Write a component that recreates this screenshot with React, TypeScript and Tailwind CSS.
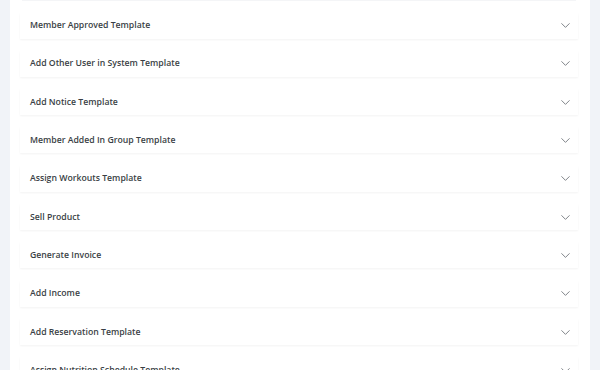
import React from 'react';
import { ChevronDown } from 'lucide-react';

const templates = [
  'Member Approved Template',
  'Add Other User in System Template',
  'Add Notice Template',
  'Member Added In Group Template',
  'Assign Workouts Template',
  'Sell Product',
  'Generate Invoice',
  'Add Income',
  'Add Reservation Template',
  'Assign Nutrition Schedule Template',
];

export default function App() {
  return (
    <div
      className="w-[600px] h-[370px] overflow-hidden bg-[#f1f3f8] flex pl-[10px] pr-[10px]"
      style={{ fontFamily: '"Open Sans", "Noto Sans", sans-serif' }}
    >
      <div className="flex-1 bg-white pl-[10px] pr-[12px]">
        {/* bottom edge of the card above the fold */}
        <div className="h-[1px] mx-[2px] bg-[#f4f5f7]" />
        <div className="flex flex-col gap-[12.33px] pt-[11.5px]">
          {templates.map((title) => (
            <div
              key={title}
              className="h-[26px] flex items-center justify-between pl-[10px] pr-[5px] bg-white shadow-[0_1px_2px_rgba(0,0,0,0.05)]"
            >
              <span className="text-[8.7px] font-semibold text-[#3a3f45]">{title}</span>
              <ChevronDown className="w-[15px] h-[15px] text-[#62676e]" strokeWidth={1.3} />
            </div>
          ))}
        </div>
      </div>
    </div>
  );
}
